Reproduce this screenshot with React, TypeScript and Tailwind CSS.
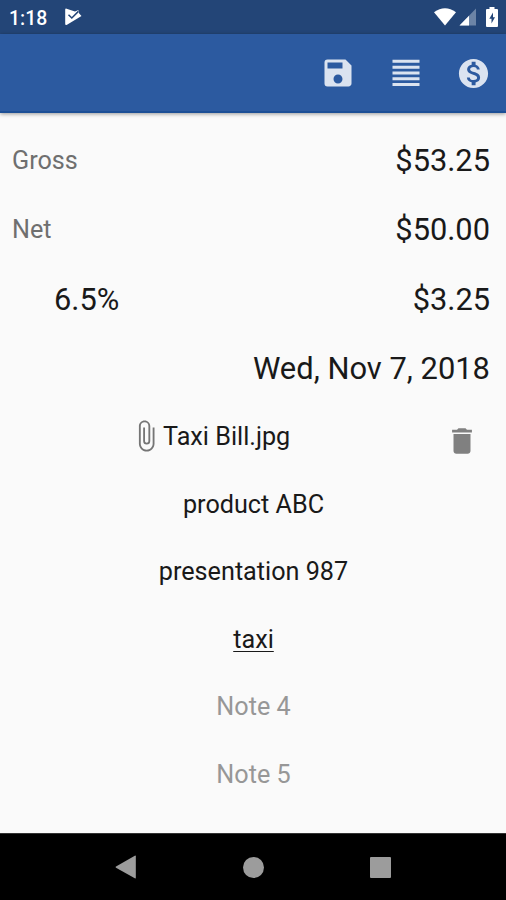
import React from "react";

interface Amount {
  label: string;
  value: string;
  indent?: boolean;
}

interface Note {
  text: string;
  hint?: boolean;
  underline?: boolean;
}

const amounts: Amount[] = [
  { label: "Gross", value: "$53.25" },
  { label: "Net", value: "$50.00" },
  { label: "6.5%", value: "$3.25", indent: true },
];

const notes: Note[] = [
  { text: "product ABC" },
  { text: "presentation 987" },
  { text: "taxi", underline: true },
  { text: "Note 4", hint: true },
  { text: "Note 5", hint: true },
];

const StatusBar: React.FC = () => (
  <div className="h-[34px] bg-[#234577] flex items-center pl-[9px] pr-[8px] text-white">
    <span className="text-[19.4px] font-medium leading-none mt-[3px]">1:18</span>
    <svg className="ml-[17px] w-[18px] h-[18px]" viewBox="0 0 18 18">
      <path d="M1.2 1.700Q1.200.3 2.600.7L11 3.500 14.300 2 15 5.300 17.500 8 3 16.700Q1.200 17.700 1.200 15.700z" fill="#fff" />
      <path d="M4.500 6.800l3.300 3.200 6.600-6.600" fill="none" stroke="#234577" strokeWidth="1.5" />
    </svg>
    <div className="ml-auto flex items-center">
      <svg className="w-[22px] h-[18px]" viewBox="0 0 22 18">
        <path d="M0 4.200Q11-3.800 22 4.200L11 17.600z" fill="#fff" />
      </svg>
      <svg className="ml-[3px] w-[18px] h-[18px]" viewBox="0 0 18 18">
        <path d="M17 .5V17.500H.5z" fill="#6c84a6" />
        <path d="M10 7.700V17.500H.5z" fill="#fff" />
      </svg>
      <svg className="ml-[9px] w-[12px] h-[20px]" viewBox="0 0 12 20">
        <path d="M3.500 0h5v2H11q1 0 1 1v16q0 1-1 1H1q-1 0-1-1V3q0-1 1-1h2.500z" fill="#fff" />
        <path d="M7 5.500L3.300 11.800h2.200V16.500L9 10.200H7z" fill="#234577" />
      </svg>
    </div>
  </div>
);

const Toolbar: React.FC = () => (
  <header className="h-[79px] pt-px bg-[#2c5aa0] border-b-2 border-[#1c4f96] shadow-[0_1px_4px_rgba(0,0,0,0.4)] flex items-center justify-end gap-8 pr-[15px] text-[#dbe3f0]">
    <button>
      <svg className="w-[36px] h-[36px]" viewBox="0 0 24 24" fill="currentColor">
        <path d="M17 3H5a2 2 0 0 0-2 2v14a2 2 0 0 0 2 2h14c1.100 0 2-.9 2-2V7l-4-4zm-5 16c-1.660 0-3-1.340-3-3s1.340-3 3-3 3 1.340 3 3-1.340 3-3 3zm3-10H5V5h10v4z" />
      </svg>
    </button>
    <button>
      <svg className="w-[36px] h-[36px]" viewBox="0 0 36 36" fill="currentColor">
        <path d="M4.500 4.800h27v3h-27zM4.500 10.700h27v3h-27zM4.500 16.500h27v3h-27zM4.500 22.300h27v3h-27zM4.500 28.100h27v3h-27z" />
      </svg>
    </button>
    <button>
      <svg className="w-[35px] h-[35px]" viewBox="0 0 24 24" fill="currentColor">
        <path d="M12 2C6.480 2 2 6.480 2 12s4.480 10 10 10 10-4.480 10-10S17.520 2 12 2zm1.410 16.090V20h-2.670v-1.930c-1.710-.36-3.160-1.460-3.270-3.400h1.960c.1 1.050.82 1.870 2.650 1.870 1.960 0 2.400-.98 2.400-1.590 0-.83-.44-1.610-2.670-2.140-2.480-.6-4.180-1.620-4.180-3.670 0-1.720 1.390-2.840 3.110-3.210V4h2.670v1.950c1.860.45 2.790 1.860 2.850 3.390H14.300c-.05-1.110-.64-1.870-2.220-1.870-1.500 0-2.400.68-2.400 1.640 0 .84.65 1.390 2.670 1.910s4.180 1.390 4.180 3.910c-.01 1.830-1.380 2.830-3.120 3.160z" />
      </svg>
    </button>
  </header>
);

const NavBar: React.FC = () => (
  <nav className="h-[67px] bg-black flex items-center pl-[115px] pr-[115px] justify-between border-t border-[#333] text-[#9c9c9c]">
    <svg className="w-[21px] h-6" viewBox="0 0 21 24" fill="currentColor">
      <path d="M20.800 1.200v21.600q0 1-1 .5L1 12.800q-1-.7 0-1.300L19.800.7q1-.5 1 .5z" />
    </svg>
    <div className="w-[21px] h-[21px] rounded-full bg-current" />
    <div className="w-[21px] h-[21px] rounded-[1px] bg-current" />
  </nav>
);

const App: React.FC = () => {
  return (
    <div className="w-[506px] h-[900px] flex flex-col overflow-hidden bg-[#fafafa] text-[#191919] font-['Roboto',sans-serif]">
      <StatusBar />
      <Toolbar />

      <main className="flex-1 pt-[13.4px]">
        {/* Amounts */}
        {amounts.map((row) => (
          <div key={row.label} className="h-[69.3px] flex items-center justify-between pl-3 pr-4">
            <span className={row.indent ? "pl-[42px] text-[30.8px]" : "text-[25.2px] leading-9 text-[#6f6f6f]"}>
              {row.label}
            </span>
            <span className="text-[30.8px]">{row.value}</span>
          </div>
        ))}
        <div className="h-[69.3px] flex items-center justify-end pr-4 text-[30.9px]">
          Wed, Nov 7, 2018
        </div>

        {/* Attachment */}
        <div className="h-[67.5px] flex items-center pl-[129px] pr-[27px]">
          <svg className="w-[34px] h-[34px] mb-[3px] text-[#757575]" viewBox="0 0 24 24" fill="currentColor">
            <path d="M16.700 6v11.500c0 2.320-1.880 4.200-4.200 4.200s-4.200-1.880-4.200-4.200V5a2.700 2.700 0 0 1 5.400 0v10.500c0 .66-.54 1.200-1.200 1.200s-1.200-.54-1.200-1.200V6H10v9.500a2.500 2.500 0 0 0 5 0V5c0-2.210-1.790-4-4-4S7 2.790 7 5v12.500c0 3.040 2.460 5.500 5.500 5.500s5.500-2.460 5.500-5.500V6h-1.300z" />
          </svg>
          <span className="text-[25.2px]">Taxi Bill.jpg</span>
          <button className="ml-auto mt-[7px]">
            <svg className="w-[34px] h-[34px] text-[#808080]" viewBox="0 0 24 24" fill="currentColor">
              <path d="M6 19c0 1.100.9 2 2 2h8c1.100 0 2-.9 2-2V7H6v12zM19 4h-3.500l-1-1h-5l-1 1H5v2h14V4z" />
            </svg>
          </button>
        </div>

        {/* Notes */}
        {notes.map((note) => (
          <div key={note.text} className="h-[67.5px] flex items-center justify-center text-[25.2px] pl-px">
            <span
              className={
                note.hint
                  ? "text-[#979797]"
                  : note.underline
                    ? "underline decoration-1 underline-offset-[3px]"
                    : ""
              }
            >
              {note.text}
            </span>
          </div>
        ))}
      </main>

      <NavBar />
    </div>
  );
};

export default App;
